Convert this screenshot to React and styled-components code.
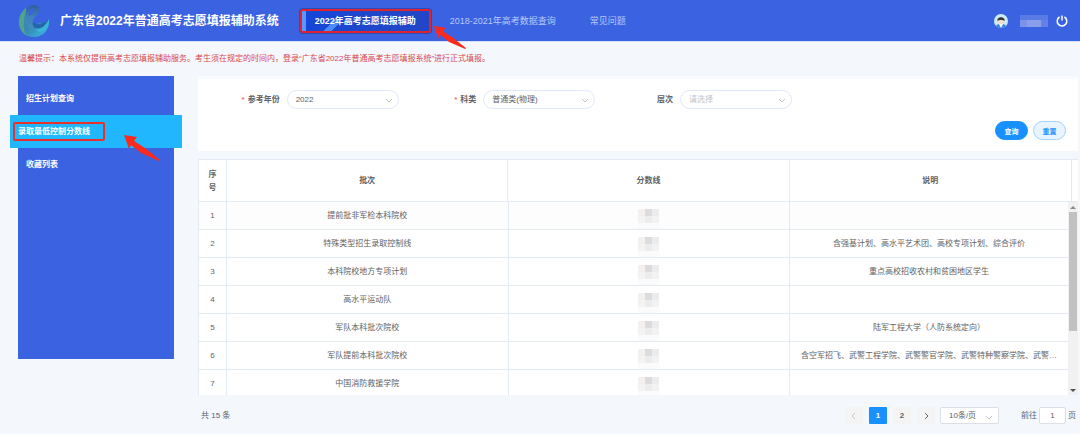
import React, { useState } from "react";
import styled, { createGlobalStyle, css } from "styled-components";

const navItems = ["2022年高考志愿填报辅助", "2018-2021年高考数据查询", "常见问题"];

const menuItems = ["招生计划查询", "录取最低控制分数线", "收藏列表"];

const filters = [
  { id: "year", label: "参考年份", required: true, options: ["2022", "2021"] },
  { id: "subject", label: "科类", required: true, options: ["普通类(物理)", "普通类(历史)"] },
  { id: "level", label: "层次", placeholder: true, options: ["请选择", "本科", "专科"] },
];

const rows = [
  { batch: "提前批非军检本科院校", note: "" },
  { batch: "特殊类型招生录取控制线", note: "含强基计划、高水平艺术团、高校专项计划、综合评价" },
  { batch: "本科院校地方专项计划", note: "重点高校招收农村和贫困地区学生" },
  { batch: "高水平运动队", note: "" },
  { batch: "军队本科批次院校", note: "陆军工程大学（人防系统定向）" },
  {
    batch: "军队提前本科批次院校",
    note: "含空军招飞、武警工程学院、武警警官学院、武警特种警察学院、武警…",
  },
  { batch: "中国消防救援学院", note: "" },
];

const Logo = () => (
  <svg width="32" height="34" viewBox="0 0 32 34" aria-hidden="true">
    <defs>
      <linearGradient id="body" x1="0" y1="0" x2="1" y2="1">
        <stop offset="0" stopColor="#3f8f9c" />
        <stop offset="0.5" stopColor="#3a86b4" />
        <stop offset="1" stopColor="#35c0e6" />
      </linearGradient>
      <linearGradient id="loop" x1="0" y1="0" x2="0" y2="1">
        <stop offset="0" stopColor="#2f5f9c" />
        <stop offset="0.5" stopColor="#3f82bc" />
        <stop offset="1" stopColor="#3f8fc0" />
      </linearGradient>
    </defs>
    <path
      d="M8 4C3 8 1 13 1 18c0 9 6 15 15 15 10 0 16-8 15-18-2 2-5 4-9 4-3 0-5 2-8 1C10 18 8 11 8 4z"
      fill="url(#body)"
    />
    <path d="M8 4C3 8 1 13 1 18c0 6 3 11 8 14-3-5-4-9-3-15C6 12 8 9 8 4z" fill="#4fa58c" />
    <path
      d="M8 8c0-4 3-7 8-7 4 0 6 3 5 6-1 4-5 6-6 10-1 3 0 6 3 9-6 0-11-6-11-12 0-2 1-4 1-6zm3 4c2-1 5-3 5-6 0-2-3-2-4 0-1 2-1 4-1 6z"
      fill="url(#loop)"
      fillRule="evenodd"
    />
    <path d="M15 18c4 4 10 2 16-3-2 6-5 10-9 11-5 0-8-4-7-8z" fill="#2366ac" />
    <path d="M17 24c5 2 10-1 14-9 1 8-4 13-9 13-2 0-4-2-5-4z" fill="#3bb4da" />
  </svg>
);

const Avatar = () => (
  <svg width="14" height="14" viewBox="0 0 14 14" aria-hidden="true">
    <circle cx="7" cy="7" r="7" fill="#c9ecf7" />
    <path d="M2 12c1-2 3-2 5-2s4 0 5 2a7 7 0 0 1-10 0z" fill="#3f86e0" />
    <path d="M5 10h4l-2 4z" fill="#fff" />
    <circle cx="7" cy="7.5" r="3" fill="#f8dccb" />
    <path d="M3.5 7c-1-5 8-5 7 0-1-1-2-1-3.500-1s-2.500 0-3.500 1z" fill="#3a3434" />
  </svg>
);

const PowerIcon = () => (
  <svg width="12" height="12" viewBox="0 0 12 12" fill="none" stroke="#fff" strokeWidth="1.5" aria-hidden="true">
    <path d="M3.600 2a4.800 4.800 0 1 0 4.800 0M6 0.500v5" />
  </svg>
);

const Chevron = ({ d = "M1 3l3 3 3-3" }) => (
  <svg width="8" height="8" viewBox="0 0 8 8" fill="none" stroke="currentColor" aria-hidden="true">
    <path d={d} />
  </svg>
);

const Arrow = ({ width = 38, height = 28 }) => (
  <svg width={width} height={height} viewBox="0 0 38 28" preserveAspectRatio="none" aria-hidden="true">
    <path d="M1 1l13 2-3 4 11 7 15 12-1 1-18-8L8 11l-2 4z" fill="#fb2a1c" />
  </svg>
);

const Mosaic = () => (
  <svg width="22" height="27" viewBox="0 0 22 27" role="img" aria-label="已隐藏">
    <path d="M0 7h7v7H0z" fill="#f3f0ee" />
    <path d="M7 7h7v7H7z" fill="#dcdcdf" />
    <path d="M14 7h7v7h-7z" fill="#ececef" />
    <path d="M0 14h7v7H0z" fill="#f3f3f4" />
    <path d="M7 14h7v7H7z" fill="#ececed" />
    <path d="M14 14h7v7h-7z" fill="#f1f2f3" />
    <path d="M0 21h22v6H0z" fill="#fbfbfc" />
  </svg>
);

const App = () => {
  const [activeNav, setActiveNav] = useState(0);
  const [activeMenu, setActiveMenu] = useState(1);
  const [page, setPage] = useState(1);

  return (
    <>
      <GlobalStyle />
      <Header>
        <Logo />
        <Title>广东省2022年普通高考志愿填报辅助系统</Title>
        <Nav>
          {navItems.map((item, index) => (
            <NavLink key={item} href="#" $active={activeNav === index} onClick={() => setActiveNav(index)}>
              {item}
              {index === 0 && (
                <NavArrow>
                  <Arrow width={34} height={25} />
                </NavArrow>
              )}
            </NavLink>
          ))}
        </Nav>
        <User>
          <Avatar />
          <UserName />
          <IconButton aria-label="退出">
            <PowerIcon />
          </IconButton>
        </User>
      </Header>

      <Tip>
        温馨提示：本系统仅提供高考志愿填报辅助服务。考生须在规定的时间内，登录“广东省2022年普通高考志愿填报系统”进行正式填报。
      </Tip>

      <Body>
        <Sidebar>
          {menuItems.map((item, index) => (
            <MenuLink key={item} href="#" $active={activeMenu === index} onClick={() => setActiveMenu(index)}>
              <MenuText $marked={index === 1}>{item}</MenuText>
              {index === 1 && (
                <MenuArrow>
                  <Arrow />
                </MenuArrow>
              )}
            </MenuLink>
          ))}
        </Sidebar>

        <Main>
          <FilterCard>
            <Fields>
              {filters.map((filter) => (
                <Field key={filter.id}>
                  <Label htmlFor={filter.id}>
                    {filter.required && <Star>*</Star>}
                    {filter.label}
                  </Label>
                  <SelectBox>
                    <Select id={filter.id} $placeholder={filter.placeholder}>
                      {filter.options.map((option) => (
                        <option key={option}>{option}</option>
                      ))}
                    </Select>
                    <SelectIcon>
                      <Chevron />
                    </SelectIcon>
                  </SelectBox>
                </Field>
              ))}
            </Fields>
            <Actions>
              <Button $primary>查询</Button>
              <Button>重置</Button>
            </Actions>
          </FilterCard>

          <TablePanel>
            <Table>
              <colgroup>
                <IndexCol />
                <DataCol $width="32%" />
                <DataCol $width="32%" />
                <col />
                <GutterCol />
              </colgroup>
              <thead>
                <tr>
                  <Th>序号</Th>
                  <Th>批次</Th>
                  <Th>分数线</Th>
                  <Th>说明</Th>
                  <Th aria-hidden="true" />
                </tr>
              </thead>
            </Table>
            <Scroller>
              <Rows>
                <Table>
                  <colgroup>
                    <IndexCol />
                    <DataCol $width="32.4%" />
                    <DataCol $width="32.4%" />
                    <col />
                  </colgroup>
                  <tbody>
                    {rows.map((row, index) => (
                      <Row key={row.batch}>
                        <Td>{index + 1}</Td>
                        <Td>{row.batch}</Td>
                        <Td>
                          <Mosaic />
                        </Td>
                        <Td>{row.note}</Td>
                      </Row>
                    ))}
                  </tbody>
                </Table>
              </Rows>
              <Track>
                <TrackArrow viewBox="0 0 10 10">
                  <path d="M2 7h6L5 4z" fill="#8a8a8a" />
                </TrackArrow>
                <Thumb />
                <TrackArrow viewBox="0 0 10 10">
                  <path d="M2 4h6L5 7z" fill="#505050" />
                </TrackArrow>
              </Track>
            </Scroller>
          </TablePanel>

          <Pagination>
            <Total>共 15 条</Total>
            <Pages>
              <PageButton aria-label="上一页" disabled>
                <Chevron d="M5 1L2 4l3 3" />
              </PageButton>
              {[1, 2].map((number) => (
                <PageButton key={number} $active={page === number} onClick={() => setPage(number)}>
                  {number}
                </PageButton>
              ))}
              <PageButton aria-label="下一页">
                <Chevron d="M3 1l3 3-3 3" />
              </PageButton>
            </Pages>
            <SizeBox>
              <SizeSelect aria-label="每页条数">
                <option>10条/页</option>
                <option>20条/页</option>
              </SizeSelect>
              <SelectIcon>
                <Chevron />
              </SelectIcon>
            </SizeBox>
            <Jump>
              前往
              <JumpInput type="text" defaultValue="1" />
              页
            </Jump>
          </Pagination>
        </Main>
      </Body>
    </>
  );
};

export default App;

const GlobalStyle = createGlobalStyle`
  * {
    box-sizing: border-box;
  }

  body {
    margin: 0;
    background-color: #f4f7fc;
    color: #606266;
    font-size: 8px;
    line-height: 13px;
  }

  body, button, input, select {
    font-family: "Liberation Sans", "Noto Sans CJK SC", sans-serif;
  }
`;

const Header = styled.header`
  display: flex;
  align-items: center;
  height: 42px;
  padding: 0 12px 0 18px;
  background-color: #3b62e0;
  border-bottom: 1px solid #d5dff7;
`;

const Title = styled.h1`
  margin: 0 21px 0 10px;
  color: #fff;
  font-size: 12px;
  line-height: 20px;
  white-space: nowrap;
`;

const Nav = styled.nav`
  display: flex;
  align-items: center;
  flex: 1;
`;

const NavLink = styled.a`
  position: relative;
  padding: 0 17px;
  color: #b7c8f8;
  font-size: 9px;
  line-height: 20px;
  text-decoration: none;
  white-space: nowrap;

  ${({ $active }) =>
    $active &&
    css`
      padding: 0 13px;
      margin-right: 2px;
      border: 2px solid #e0242c;
      border-radius: 2px;
      outline: 1px solid #2c4bbd;
      background:
        linear-gradient(135deg, transparent 42%, #4b8bfa 42%, #4b8bfa 68%, transparent 68%) 22px 100% / 16px 12px
          no-repeat,
        linear-gradient(90deg, #5b97ff 4px, #1646d8 4px, #2147c8 60%);
      color: #fff;
      font-weight: bold;
    `}
`;

const NavArrow = styled.span`
  position: absolute;
  top: 14px;
  left: 131px;
  line-height: 0;
`;

const User = styled.div`
  display: flex;
  align-items: center;
  gap: 12px;
`;

const UserName = styled.span`
  width: 28px;
  height: 12px;
  background:
    linear-gradient(#5a7ae6 5px, transparent 5px),
    linear-gradient(90deg, #7d93ea 7px, #8b9eec 7px 21px, #6580e6 21px);
`;

const IconButton = styled.button`
  display: flex;
  margin-left: -4px;
  padding: 0;
  border: none;
  background: none;
  cursor: pointer;
`;

const Tip = styled.p`
  margin: 0;
  padding: 10px 19px 11px;
  color: #d9484c;
`;

const Body = styled.div`
  display: flex;
  align-items: flex-start;
  gap: 24px;
  padding: 0 2px 0 18px;
`;

const Sidebar = styled.nav`
  width: 156px;
  min-height: 283px;
  padding-top: 6px;
  background-color: #3b62e0;
`;

const MenuLink = styled.a`
  position: relative;
  display: flex;
  align-items: center;
  height: 33px;
  padding: 0 8px;
  color: #fff;
  font-weight: bold;
  text-decoration: none;

  ${({ $active }) =>
    $active &&
    css`
      margin: 0 -8px;
      padding: 0 3px;
      background-color: #20b7ff;
    `}
`;

const MenuText = styled.span`
  ${({ $marked }) =>
    $marked &&
    css`
      padding: 1px 13px 1px 3px;
      border: 2px solid #e8302c;
      border-radius: 2px;
    `}
`;

const MenuArrow = styled.span`
  position: absolute;
  top: 19px;
  left: 113px;
  line-height: 0;
`;

const Main = styled.main`
  flex: 1;
  min-width: 0;
`;

const FilterCard = styled.section`
  margin-bottom: 8px;
  padding: 11px 12px 11px 4px;
  border-top: 3px solid #f9fafd;
  background-color: #fff;
`;

const Fields = styled.div`
  display: grid;
  grid-template-columns: repeat(3, 1fr);
  padding-right: 274px;
`;

const Field = styled.div`
  display: flex;
  align-items: center;
  justify-content: flex-end;
  gap: 7px;
`;

const Label = styled.label`
  font-weight: bold;
`;

const Star = styled.span`
  margin-right: 3px;
  color: #f56c6c;
`;

const SelectBox = styled.div`
  position: relative;
  width: 112px;
`;

const Select = styled.select`
  width: 100%;
  height: 19px;
  padding: 0 8px;
  appearance: none;
  border: 1px solid #dfe8fb;
  border-radius: 10px;
  background-color: #fff;
  color: ${({ $placeholder }) => ($placeholder ? "#c0c4cc" : "#606266")};
  font-size: 8px;
`;

const SelectIcon = styled.span`
  position: absolute;
  top: 6px;
  right: 6px;
  display: flex;
  color: #c0c4cc;
  pointer-events: none;
`;

const Actions = styled.div`
  display: flex;
  justify-content: flex-end;
  gap: 5px;
  margin-top: 12px;
`;

const Button = styled.button`
  width: 33px;
  height: 19px;
  padding: 0;
  border: 1px solid ${({ $primary }) => ($primary ? "#1890ff" : "#a3d3ff")};
  border-radius: 10px;
  background-color: ${({ $primary }) => ($primary ? "#1890ff" : "#e8f4ff")};
  color: ${({ $primary }) => ($primary ? "#fff" : "#1890ff")};
  font-size: 7px;
  font-weight: bold;
  cursor: pointer;
`;

const TablePanel = styled.section`
  border-top: 1px solid #e3eaf3;
  border-left: 1px solid #e3eaf3;
  background-color: #fff;
`;

const Table = styled.table`
  width: 100%;
  border-spacing: 0;
  table-layout: fixed;
`;

const IndexCol = styled.col`
  width: 28px;
`;

const DataCol = styled.col`
  width: ${({ $width }) => $width};
`;

const GutterCol = styled.col`
  width: 6px;
`;

const Th = styled.th`
  height: 42px;
  padding: 0 8px;
  border-right: 1px solid #e3eaf3;
  border-bottom: 1px solid #e3eaf3;

  &:last-child {
    padding: 0;
    border-right: none;
  }
`;

const Scroller = styled.div`
  display: flex;
  height: 193px;
`;

const Rows = styled.div`
  flex: 1;
  min-width: 0;
  overflow: hidden;
`;

const Row = styled.tr`
  &:first-child {
    background-color: #fdfdfd;
  }
`;

const Td = styled.td`
  height: 28px;
  padding: 0 6px;
  overflow: hidden;
  border-right: 1px solid #e3eaf3;
  border-bottom: 1px solid #e3eaf3;
  text-align: center;
  text-overflow: ellipsis;
  white-space: nowrap;

  &:last-child {
    border-right: none;
  }

  svg {
    display: block;
    margin: 0 auto;
  }
`;

const Track = styled.div`
  display: flex;
  flex-direction: column;
  width: 10px;
  background-color: #f1f1f1;
`;

const TrackArrow = styled.svg`
  width: 10px;
  height: 10px;
`;

const Thumb = styled.div`
  flex: 1;
  margin: 0 1px 54px;
  background-color: #c1c1c1;
`;

const Pagination = styled.footer`
  display: flex;
  align-items: center;
  padding: 12px 2px 12px 3px;
`;

const Total = styled.span`
  margin-right: auto;
`;

const Pages = styled.div`
  display: flex;
  gap: 6px;
`;

const PageButton = styled.button`
  display: flex;
  align-items: center;
  justify-content: center;
  width: 18px;
  height: 17px;
  padding: 0;
  border: none;
  border-radius: 1px;
  background-color: ${({ $active }) => ($active ? "#1890ff" : "#f4f4f5")};
  color: ${({ $active }) => ($active ? "#fff" : "#606266")};
  font-size: 8px;
  font-weight: bold;
  cursor: pointer;

  &:disabled {
    color: #c0c4cc;
  }
`;

const SizeBox = styled.div`
  position: relative;
  width: 59px;
  margin: 0 22px 0 5px;
`;

const SizeSelect = styled.select`
  display: block;
  width: 100%;
  height: 17px;
  padding: 0 8px;
  appearance: none;
  border: 1px solid #dcdfe6;
  border-radius: 2px;
  background-color: #fff;
  color: #606266;
  font-size: 8px;
`;

const Jump = styled.label`
  display: flex;
  align-items: center;
  gap: 2px;
`;

const JumpInput = styled.input`
  width: 27px;
  height: 17px;
  padding: 0;
  border: 1px solid #dcdfe6;
  border-radius: 2px;
  color: #606266;
  font-size: 8px;
  text-align: center;
`;
